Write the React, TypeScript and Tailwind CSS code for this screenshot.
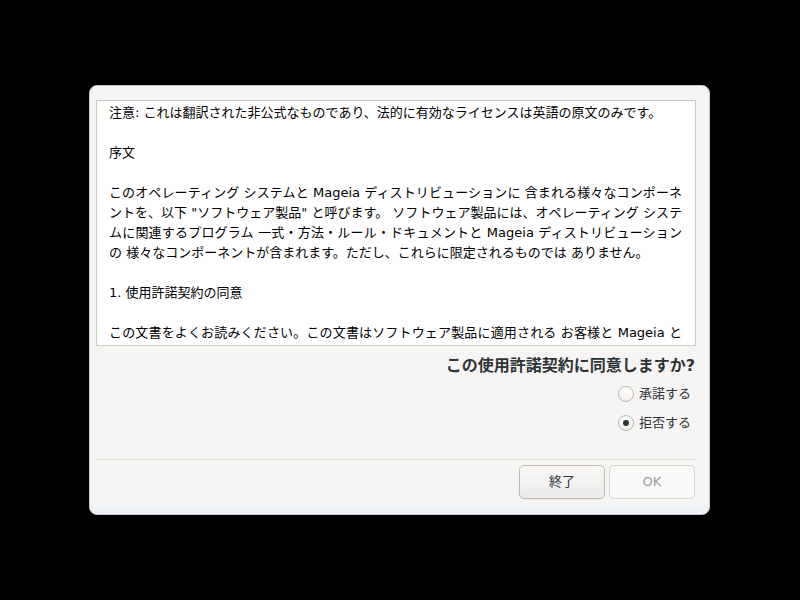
import React from 'react';

const lines: { text: string; justify?: boolean }[] = [
    { text: '注意: これは翻訳された非公式なものであり、法的に有効なライセンスは英語の原文のみです。' },
    { text: '' },
    { text: '序文' },
    { text: '' },
    { text: 'このオペレーティング システムと Mageia ディストリビューションに 含まれる様々なコンポーネ', justify: true },
    { text: 'ントを、以下 "ソフトウェア製品" と呼びます。 ソフトウェア製品には、オペレーティング システ', justify: true },
    { text: 'ムに関連するプログラム 一式・方法・ルール・ドキュメントと Mageia ディストリビューション', justify: true },
    { text: 'の 様々なコンポーネントが含まれます。ただし、これらに限定されるものでは ありません。' },
    { text: '' },
    { text: '1. 使用許諾契約の同意' },
    { text: '' },
    { text: 'この文書をよくお読みください。この文書はソフトウェア製品に適用される お客様と Mageia と', justify: true },
    { text: 'の間の法的な契約書です。ソフトウェア製品の全部または一部を複製、使用、配布することで、', justify: true },
];

const Radio: React.FC<{ label: string; checked?: boolean }> = ({ label, checked }) => (
    <div className="h-[29px] flex items-center justify-end gap-[5px] pr-[4px]">
        <div className="w-[16px] h-[16px] rounded-full border border-[#b9b6b1] bg-gradient-to-b from-white to-[#f1efed] flex items-center justify-center shadow-[inset_0_1px_0_white]">
            {checked && <div className="w-[6px] h-[6px] rounded-full bg-[#2e3436]" />}
        </div>
        <span className="text-[13px] text-[#2e3436]">{label}</span>
    </div>
);

const App: React.FC = () => {
    return (
        <div
            className="w-[800px] h-[600px] bg-black pt-[85px] pl-[89px]"
            style={{ fontFamily: '"DejaVu Sans", "Noto Sans CJK JP", sans-serif' }}
        >
            <div className="w-[621px] h-[430px] rounded-[8px] border border-[#c3ccd6] bg-[#eef1f6] px-[1px] pt-[1px] pb-[8px]">
                <div className="h-full bg-[#f6f5f4] rounded-t-[7px] flex flex-col pl-[5px] pr-[13px] pt-[13px]">
                    <div className="w-[600px] h-[246px] bg-white border border-[#cdc7c2] overflow-hidden pl-[12px] pr-[13px] pt-[2px]">
                        {lines.map((l, i) => (
                            <div
                                key={i}
                                className={
                                    'h-[20px] leading-[20px] text-[13px] text-black whitespace-pre ' +
                                    (l.justify ? 'text-justify [text-align-last:justify]' : '')
                                }
                            >
                                {l.text || ' '}
                            </div>
                        ))}
                    </div>

                    <div className="mt-[10px] h-[20px] leading-[20px] text-right text-[16px] font-bold text-[#2e3436]">
                        この使用許諾契約に同意しますか?
                    </div>

                    <div className="mt-[3px] flex flex-col">
                        <Radio label="承諾する" />
                        <Radio label="拒否する" checked />
                    </div>

                    <div className="mt-[22px] h-px w-[600px] bg-[#dcd9d5]" />

                    <div className="mt-[5px] flex justify-end gap-[4px]">
                        <button className="w-[86px] h-[34px] rounded-[5px] border border-[#c0bab4] bg-gradient-to-b from-[#f9f8f7] to-[#edebe9] text-[13px] text-[#2e3436] shadow-[0_1px_0_rgba(0,0,0,0.05)]">
                            終了
                        </button>
                        <button className="w-[86px] h-[34px] rounded-[5px] border border-[#d7d3cf] bg-[#faf9f8] text-[13px] text-[#9a9c9c]">
                            OK
                        </button>
                    </div>
                </div>
            </div>
        </div>
    );
};

export default App;
